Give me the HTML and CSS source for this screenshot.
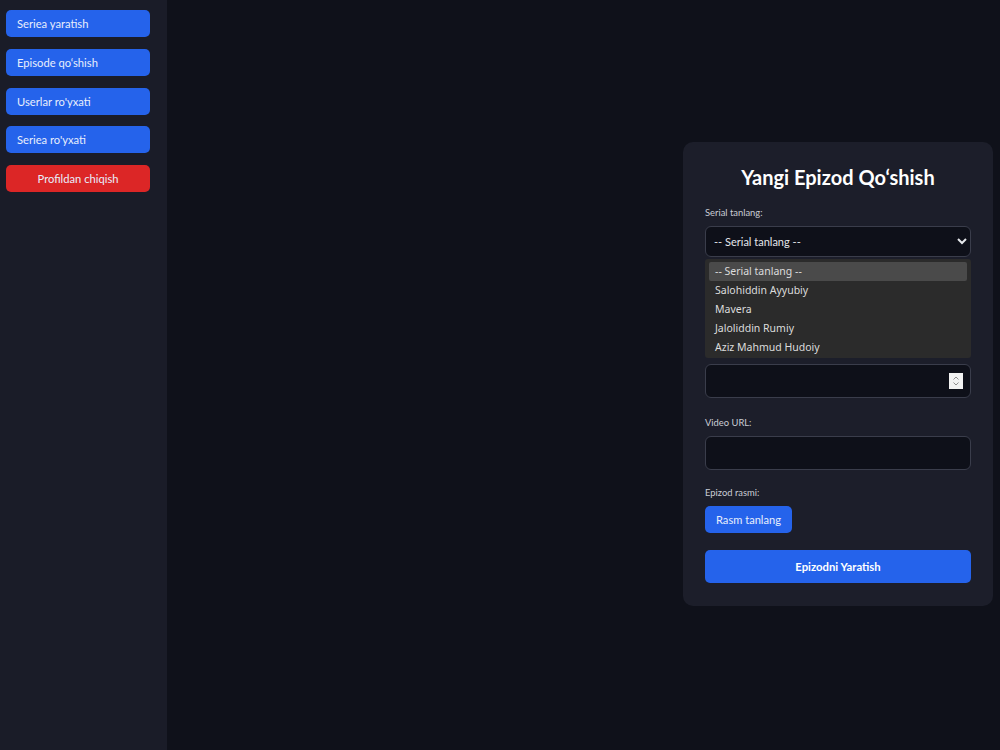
FILE: index.html
```html
<!DOCTYPE html>
<html lang="uz">
<head>
    <meta charset="UTF-8">
    <meta name="viewport" content="width=device-width, initial-scale=1.0">
    <title>Admin panel</title>
    <link rel="stylesheet" href="styles.css">
</head>
<body>
    <div class="layout">
        <aside class="sidebar">
            <button class="side-btn">Seriea yaratish</button>
            <button class="side-btn">Episode qo‘shish</button>
            <button class="side-btn">Userlar ro'yxati</button>
            <button class="side-btn">Seriea ro'yxati</button>
            <button class="side-btn logout">Profildan chiqish</button>
        </aside>

        <main class="content">
            <form class="card">
                <h2 class="card-title">Yangi Epizod Qo‘shish</h2>

                <div class="field">
                    <label>Serial tanlang:</label>
                    <div class="select-wrap">
                        <select class="input select">
                            <option>-- Serial tanlang --</option>
                            <option>Salohiddin Ayyubiy</option>
                            <option>Mavera</option>
                            <option>Jaloliddin Rumiy</option>
                            <option>Aziz Mahmud Hudoiy</option>
                        </select>
                        <!-- opened list of the select -->
                        <div class="dropdown">
                            <div class="dropdown-item active">-- Serial tanlang --</div>
                            <div class="dropdown-item">Salohiddin Ayyubiy</div>
                            <div class="dropdown-item">Mavera</div>
                            <div class="dropdown-item">Jaloliddin Rumiy</div>
                            <div class="dropdown-item">Aziz Mahmud Hudoiy</div>
                        </div>
                    </div>
                </div>

                <!-- these two fields sit under the opened list -->
                <div class="field">
                    <label class="covered"></label>
                    <input class="input" type="text">
                </div>

                <div class="field number-field">
                    <label class="covered"></label>
                    <div class="number-wrap">
                        <input class="input" type="text">
                        <span class="spinner">
                            <svg width="8" height="12" viewBox="0 0 8 12" fill="none" stroke="#8f8f8f" stroke-width="1">
                                <path d="M1.5 4.5 L4 2 L6.5 4.5"/>
                                <path d="M1.5 7.5 L4 10 L6.5 7.5"/>
                            </svg>
                        </span>
                    </div>
                </div>

                <div class="field">
                    <label>Video URL:</label>
                    <input class="input" type="text">
                </div>

                <div class="field">
                    <label>Epizod rasmi:</label>
                    <div><button type="button" class="file-btn">Rasm tanlang</button></div>
                </div>

                <button type="button" class="submit-btn">Epizodni Yaratish</button>
            </form>
        </main>
    </div>
</body>
</html>
```

FILE: styles.css
```css
/* Admin panel - dark theme */
* {
    box-sizing: border-box;
}

body {
    margin: 0;
    font-family: Lato, "Noto Sans", sans-serif;
    background-color: #0f111a;
    color: #f3f4f6;
}

.layout {
    display: flex;
    height: 100vh;
}

.sidebar {
    width: 167px;
    flex-shrink: 0;
    background-color: #1a1c28;
    padding: 10px 17px 0 6px;
    display: flex;
    flex-direction: column;
    gap: 11.75px;
}

.side-btn {
    height: 27px;
    background-color: #2563eb;
    color: #e8eefc;
    border: none;
    border-radius: 5px;
    font-family: inherit;
    font-size: 11.2px;
    text-align: left;
    padding: 0 11px;
    cursor: pointer;
}

.side-btn.logout {
    background-color: #dc2626;
    text-align: center;
}

.content {
    flex: 1;
    display: flex;
    justify-content: flex-end;
    align-items: center;
    padding: 0 7px 2px 0;
}

.card {
    width: 310px;
    background-color: #1c1e2a;
    border-radius: 10px;
    padding: 22px 22px 23px;
    display: flex;
    flex-direction: column;
}

.card-title {
    margin: 0 0 17px;
    text-align: center;
    font-size: 20px;
    font-weight: 700;
    color: #ffffff;
    line-height: 26px;
}

.field {
    display: flex;
    flex-direction: column;
    margin-bottom: 17px;
}

.number-field {
    margin-bottom: 19px;
}

.field label {
    font-size: 9.4px;
    color: #c9ccd4;
    line-height: 12px;
    height: 12px;
    margin-bottom: 7px;
}

.input {
    width: 100%;
    height: 34px;
    background-color: #0e1019;
    border: 1px solid #3a3d4b;
    border-radius: 6px;
    color: #e5e7eb;
    font-family: inherit;
    font-size: 11px;
    padding: 0 8px;
}

.select {
    height: 31px;
    color-scheme: dark;
    padding: 0 4px;
}

.select-wrap,
.number-wrap {
    position: relative;
}

.select-wrap {
    margin-bottom: 1px;
}

.dropdown {
    position: absolute;
    top: 33px;
    left: 0;
    right: 0;
    height: 99px;
    background-color: #2b2b2b;
    border-radius: 3px;
    padding: 3px 4px;
    font-family: "Noto Sans", sans-serif;
    font-size: 10.5px;
    color: #dcdcdc;
    z-index: 5;
}

.dropdown-item {
    height: 19px;
    line-height: 19px;
    padding: 0 6px;
}

.dropdown-item.active {
    background-color: #4a4a4a;
    border-radius: 2px;
}

.spinner {
    position: absolute;
    right: 8px;
    top: 9px;
    width: 14px;
    height: 16px;
    background-color: #f2f2f2;
    display: flex;
    align-items: center;
    justify-content: center;
}

.file-btn {
    height: 27px;
    padding: 0 11px;
    background-color: #2563eb;
    color: #e8eefc;
    border: none;
    border-radius: 5px;
    font-family: inherit;
    font-size: 11.1px;
    cursor: pointer;
}

.submit-btn {
    height: 33px;
    background-color: #2563eb;
    color: #ffffff;
    border: none;
    border-radius: 5px;
    font-family: inherit;
    font-size: 11.3px;
    font-weight: 700;
    cursor: pointer;
}
```
